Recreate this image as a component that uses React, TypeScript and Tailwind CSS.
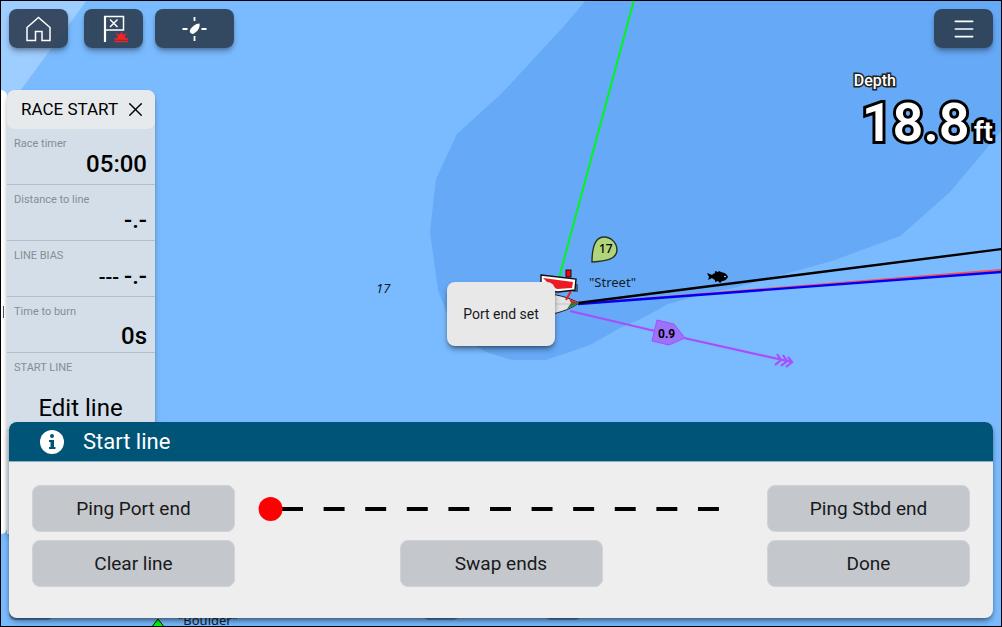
import React from 'react';
import { Menu, X } from 'lucide-react';

const toolButton =
  'flex h-[39px] items-center justify-center rounded-lg bg-[#2b3c50]/90 text-white shadow-md shadow-black/30';
const lineButton =
  'h-[47px] w-[203px] shrink-0 rounded-lg border border-[#cfd2d6] bg-[#c4c7cc] pt-px text-[19px] text-[#18191b]';

const readings = [
  { label: 'Race timer', prefix: '', value: '05:00', align: 'leading-6' },
  { label: 'Distance to line', prefix: '', value: '-.-', align: 'leading-6' },
  { label: 'LINE BIAS', prefix: '---', value: '-.-', align: 'leading-6' },
  { label: 'Time to burn', prefix: '', value: '0s', align: 'leading-8' },
];

const Chart: React.FC = () => (
  <svg
    className="absolute inset-0 h-full w-full"
    viewBox="1 1 1000 625"
    preserveAspectRatio="xMidYMid slice"
    aria-hidden="true"
  >
    {/* Depth areas */}
    <path d="M0 0H87L0 118Z" fill="#9ecdff" />
    <path
      d="M586 0 564 26 501 94 457 134 436 179 430 232 438 290 450 322 475 345 486 352 512 360 546 360 590 345 620 328 643 318 668 304 700 295 738 287 832 261 900 236 907 230 950 192 977 160 1002 130V0Z"
      fill="#66a9f6"
    />
    <g fill="#111c2c" fontFamily="Noto Sans, sans-serif">
      <text x="376" y="293" fontSize="13" fontStyle="italic">17</text>
      <text x="589" y="287" fontSize="13">"Street"</text>
      <text x="178" y="625" fontSize="13">"Boulder"</text>
    </g>

    {/* Heading, course and bearing lines */}
    <path d="M634 0 559 278" stroke="#00f51c" strokeWidth="2" />
    <path d="M578 304 1002 270" stroke="#ff4e4e" strokeWidth="2" />
    <path d="M578 304 1002 272" stroke="#0000fa" strokeWidth="2.4" />
    <path d="M578 303 1002 249" stroke="#000" strokeWidth="2.4" />

    {/* Tide vector */}
    <g stroke="#a94cff" strokeWidth="2.2" fill="none">
      <path d="M570 311 655 331M684 338 792 362" />
      <path d="M777 354L781 360L775 365M783 355L787 361L781 366M788 357L792 362L786 367" />
      <path d="M657 320L674 324L685 338L669 345L652 341Z" fill="#9b72f9" strokeWidth="1" />
    </g>
    <text x="658" y="338" fontFamily="Roboto, sans-serif" fontSize="12" fontWeight="700">0.9</text>

    {/* Fish */}
    <path
      d="M707 273Q710 274 712 275Q714 273 715 273L715 271L718 272L719 271L721 272Q727 273 728 277Q726 281 722 281L720 283L718 281L715 282L715 280Q713 279 712 278L708 280L709 277Z"
      fill="#000"
    />
    <circle cx="725" cy="276.500" r="0.8" fill="#fff" />

    {/* Waypoint marker */}
    <path d="M592 262C592 252 593 237 604 237C611 237 617 243 617 250C617 260 604 261 592 262Z" fill="#b1d57b" stroke="#263327" strokeWidth="1.4" />
    <text x="599" y="253" fontFamily="Noto Sans, sans-serif" fontSize="12" fontWeight="500">17</text>

    {/* Port mark and boat */}
    <path d="M540 293C556 294 568 297 579 303C569 310 557 314 540 316Z" fill="#e4e4e4" stroke="#222" />
    <path d="M540 304H570" stroke="#c4c4c4" />
    <path d="M569 299L579 303H571Z" fill="#ed1c24" />
    <path d="M567 309L579 303H571Z" fill="#16803a" />
    <path d="M571 291 566 300" stroke="#ed1c24" strokeWidth="2" />
    <path d="M541 275L576 279L575 290L558 292L541 291Z" fill="#fff" stroke="#111" strokeWidth="1.4" />
    <path d="M543 278L573 282L572 288L557 289L549 284Z" fill="#ed1c24" />
    <path d="M577 284V290M573 291H578" stroke="#111" />
    <rect x="566" y="270" width="5" height="7" fill="#f00" stroke="#111" />

    <path d="M151 628L158 619L165 628Z" fill="#0f0" stroke="#111" />

    {/* Lower toolbar edges */}
    <g fill="#31485f" opacity="0.45">
      <rect x="9" y="580" width="44" height="40" rx="6" />
      <rect x="423" y="580" width="36" height="40" rx="6" />
      <rect x="545" y="580" width="36" height="40" rx="6" />
    </g>
  </svg>
);

const HomeIcon: React.FC = () => (
  <svg width="28" height="28" viewBox="0 0 28 28" fill="none" stroke="currentColor" strokeWidth="1.5">
    <path d="M2 12.500 13.500 2.500 25 12.500V25.500H17V16.500H10.500V25.500H2Z" />
  </svg>
);

const StartFlagIcon: React.FC = () => (
  <svg width="28" height="28" viewBox="0 0 28 28" fill="none" stroke="currentColor" strokeWidth="1.5">
    <path d="M5 27V1" strokeWidth="2.2" />
    <path d="M4 1.500H23.500V15H4" />
    <path d="M10 4.500 17.500 12M17.500 4.500 10 12" />
    <path d="M14.500 24H29M14.500 26.500H29" stroke="#ff2020" strokeWidth="1.4" />
    <path d="M15.500 17.500L19.500 20L21.500 17L23.500 20L27.500 17.500L24.500 21.500L26 24H17L18 21.500Z" fill="#ff2020" stroke="none" />
  </svg>
);

const BoatCentreIcon: React.FC = () => (
  <svg width="26" height="26" viewBox="0 0 26 26" fill="none" stroke="currentColor" strokeWidth="1.8">
    <path d="M12.500 1V5M12.500 20V25M0.500 13H5.500M19.500 13H24.500" />
    <path d="M17.500 7.500C13.500 7.500 10 10.500 8 14Q7 17.500 11 18C14.500 16.500 18.500 12 17.500 7.500Z" fill="currentColor" stroke="none" />
  </svg>
);

const RaceStartPanel: React.FC = () => (
  <div className="flex h-[444px] items-stretch">
    <div className="flex w-1.5 items-center rounded-r-md bg-white">
      <span className="ml-0.5 h-3 w-px bg-gray-600" />
    </div>
    <section className="w-[148px] rounded-t-lg bg-[#d3dee8] shadow-md shadow-black/30">
      <header className="flex h-[39px] items-center justify-between rounded-lg bg-[#e7eaec] pr-2 pl-3.5">
        <h2 className="text-[17px]">RACE START</h2>
        <button aria-label="Close">
          <X size={23} strokeWidth={1.5} />
        </button>
      </header>
      {readings.map((item) => (
        <div key={item.label} className="flex h-14 flex-col border-b border-[#b3bec9] pt-[7px] pr-2 pl-[7px]">
          <span className="text-[11px] leading-4 text-[#868d94]">{item.label}</span>
          <span className={`text-right text-2xl font-medium ${item.align}`}>
            {item.prefix && <span className="text-xl leading-6">{item.prefix} </span>}
            {item.value}
          </span>
        </div>
      ))}
      <div className="flex h-[78px] flex-col border-b border-[#b3bec9] pt-[7px] pr-2 pl-[7px]">
        <span className="text-[11px] leading-4 text-[#868d94]">START LINE</span>
        <button className="mt-4 text-2xl">Edit line</button>
      </div>
    </section>
  </div>
);

const StartLineDialog: React.FC = () => (
  <section className="absolute inset-x-2 bottom-2 overflow-hidden rounded-lg bg-[#eee] shadow-md shadow-black/40">
    <header className="flex h-10 items-center gap-[19px] border-b border-[#8aafc2] bg-[#005478] px-[31px] text-white">
      <svg width="24" height="24" viewBox="0 0 24 24" aria-hidden="true">
        <circle cx="12" cy="12" r="12" fill="#fff" />
        <circle cx="12" cy="6" r="2" fill="#005478" />
        <path d="M9 10H14V17H15.500V19H9V17H10.500V12H9Z" fill="#005478" />
      </svg>
      <h2 className="text-[22px]">Start line</h2>
    </header>
    <div className="flex flex-col gap-2 px-[23px] pt-[23px] pb-[31px]">
      <div className="flex items-center">
        <button className={lineButton}>Ping Port end</button>
        <svg className="mr-12 ml-6 min-w-0 flex-1 overflow-visible" viewBox="0 0 461 24" aria-hidden="true">
          <path d="M23 12H461" stroke="#000" strokeWidth="4" strokeDasharray="21 20.700" />
          <circle cx="11.500" cy="12" r="12" fill="#f00" />
        </svg>
        <button className={lineButton}>Ping Stbd end</button>
      </div>
      <div className="flex justify-between">
        <button className={lineButton}>Clear line</button>
        <button className={lineButton}>Swap ends</button>
        <button className={lineButton}>Done</button>
      </div>
    </div>
  </section>
);

const App: React.FC = () => {
  return (
    <main className="relative h-screen overflow-hidden border border-black bg-[#7abbff] font-[Roboto,sans-serif] text-black">
      <Chart />
      <div className="relative">
        <nav className="flex items-center p-2">
          <button className={`${toolButton} w-[59px]`} aria-label="Home">
            <HomeIcon />
          </button>
          <button className={`${toolButton} ml-4 w-[59px]`} aria-label="Race start">
            <StartFlagIcon />
          </button>
          <button className={`${toolButton} ml-3 w-[79px]`} aria-label="Centre on boat">
            <BoatCentreIcon />
          </button>
          <button className={`${toolButton} ml-auto w-[59px]`} aria-label="Menu">
            <Menu size={26} strokeWidth={1.5} />
          </button>
        </nav>
        <div className="flex items-start justify-between">
          <div className="pt-[34px]">
            <RaceStartPanel />
          </div>
          <div className="flex flex-col pt-[13px] pr-2 text-white">
            <span className="text-base leading-6 font-medium [-webkit-text-stroke:3px_#222] [paint-order:stroke_fill]">
              Depth
            </span>
            <div className="flex items-baseline gap-1 pl-2 leading-[60px] font-semibold [-webkit-text-stroke:6px_black] [paint-order:stroke_fill]">
              <span className="text-[54px]">18.8</span>
              <span className="text-[28px]">ft</span>
            </div>
          </div>
        </div>
      </div>

      {/* Confirmation toast */}
      <div className="pointer-events-none absolute inset-0 flex items-center justify-center">
        <div role="status" className="rounded-lg bg-[#e8e8e8] px-4 py-[22px] text-sm text-[#18191b] shadow-md shadow-black/40">
          Port end set
        </div>
      </div>
      <StartLineDialog />
    </main>
  );
};

export default App;
